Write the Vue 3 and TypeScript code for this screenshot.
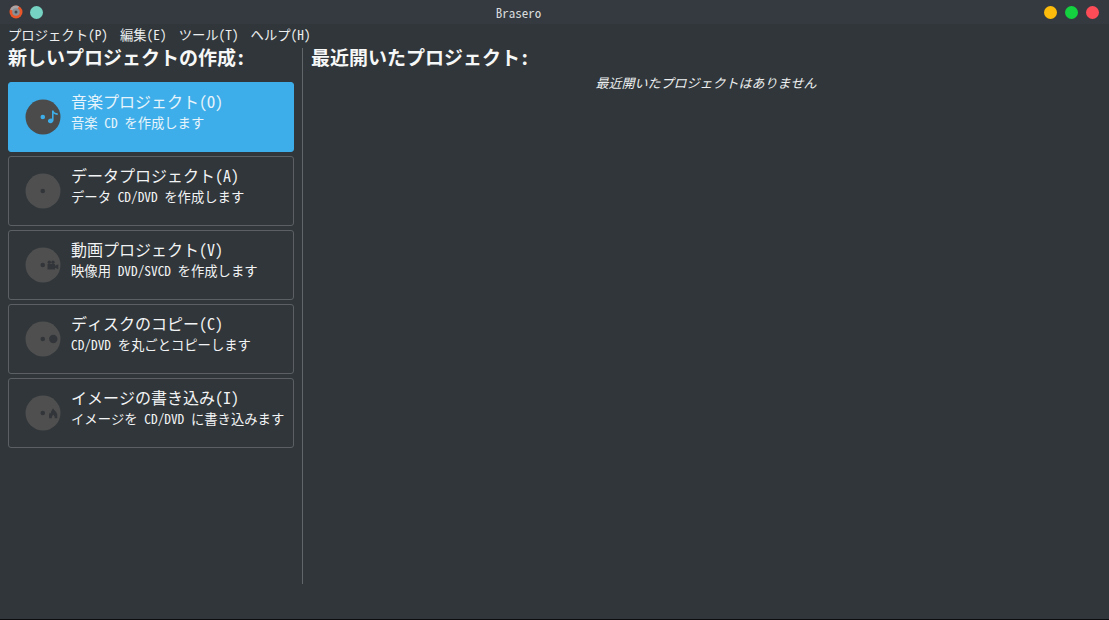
<script setup lang="ts">
interface Project {
  id: string
  title: string
  sub: string
  active?: boolean
}
const projects: Project[] = [
  { id: 'audio', title: '音楽プロジェクト(O)', sub: '音楽 CD を作成します', active: true },
  { id: 'data', title: 'データプロジェクト(A)', sub: 'データ CD/DVD を作成します' },
  { id: 'video', title: '動画プロジェクト(V)', sub: '映像用 DVD/SVCD を作成します' },
  { id: 'copy', title: 'ディスクのコピー(C)', sub: 'CD/DVD を丸ごとコピーします' },
  { id: 'burn', title: 'イメージの書き込み(I)', sub: 'イメージを CD/DVD に書き込みます' }
]
const menus = ['プロジェクト(P)', '編集(E)', 'ツール(T)', 'ヘルプ(H)']
</script>

<template>
  <div class="window">
    <header class="titlebar">
      <div class="left-buttons">
        <svg class="app-icon" width="14" height="14" viewBox="0 0 14 14">
          <circle cx="7" cy="7" r="6.5" fill="#e8562a" />
          <path d="M1 4.500A6.500 6.500 0 0 1 10 1.200L7 7Z" fill="#a9a5a6" />
          <circle cx="7" cy="7" r="3.800" fill="#8b9096" />
          <circle cx="7" cy="7" r="1.500" fill="#45494e" />
        </svg>
        <span class="dot teal"></span>
      </div>
      <div class="title">Brasero</div>
      <div class="right-buttons">
        <span class="dot yellow"></span>
        <span class="dot green"></span>
        <span class="dot red"></span>
      </div>
    </header>
    <nav class="menubar">
      <span v-for="m in menus" :key="m" class="menu">{{ m }}</span>
    </nav>
    <main class="content">
      <section class="left">
        <h2 class="heading">新しいプロジェクトの作成:</h2>
        <div class="cards">
          <div v-for="p in projects" :key="p.id" class="card" :class="{ active: p.active }">
            <svg class="disc" width="36" height="36" viewBox="0 0 36 36">
              <circle class="disc-body" cx="18" cy="18" r="17.5" />
              <circle class="disc-mark" cx="17.800" cy="18" r="2.300" />
              <path v-if="p.id === 'audio'" class="disc-mark" d="M27 11.500h1.600c.3 1.500 1.300 2.200 2.600 2.500l1.500.3v1.800l-1.500-.3c-1-.2-1.900-.6-2.600-1.200v6.400c0 2-1.500 3.200-3.100 3.200-1.500 0-2.600-.9-2.600-2.200s1.300-2.400 3-2.400c.4 0 .8.1 1.100.2Z" />
              <g v-else-if="p.id === 'video'" class="disc-mark">
                <circle cx="24.300" cy="15.300" r="1.700" />
                <circle cx="28" cy="15.300" r="1.700" />
                <rect x="22.500" y="17" width="7.500" height="5.500" />
                <path d="M30 18.700l3.300-1.500v5.100L30 20.800Z" />
              </g>
              <circle v-else-if="p.id === 'copy'" class="disc-mark" cx="28.300" cy="18" r="4.200" />
              <path v-else-if="p.id === 'burn'" class="disc-mark" d="M28.300 13.300c.4 2 4 3.600 4 7v3h-2.600c.2-1.500-.4-2.500-1.400-3.500-1 1-1.600 2-1.400 3.500H24v-3c0-1 .3-2 1-2.800.2.600.5.900.9 1.100-.1-1.900.8-3.700 2.400-5.300Z" />
            </svg>
            <div class="texts">
              <div class="card-title">{{ p.title }}</div>
              <div class="card-sub">{{ p.sub }}</div>
            </div>
          </div>
        </div>
      </section>
      <div class="separator"></div>
      <section class="right">
        <h2 class="heading">最近開いたプロジェクト:</h2>
        <p class="empty">最近開いたプロジェクトはありません</p>
      </section>
    </main>
  </div>
</template>

<style>
html, body { margin: 0; background: #30363a; }
</style>

<style scoped>
.window {
  width: 1109px;
  height: 620px;
  box-sizing: border-box;
  border-bottom: 1px solid #0b0c0d;
  background: #30363a;
  color: #f2f3f4;
  font-family: "Noto Sans Mono CJK JP", "Noto Sans CJK JP", "DejaVu Sans Mono", monospace;
  font-size: 13.33px;
  overflow: hidden;
  display: flex;
  flex-direction: column;
}
.titlebar {
  height: 24px;
  flex: none;
  display: flex;
  align-items: center;
  background: #343a3f;
}
.left-buttons {
  width: 48px;
  box-sizing: border-box;
  padding-left: 9px;
  display: flex;
  align-items: center;
  gap: 7px;
}
.right-buttons {
  width: 120px;
  box-sizing: border-box;
  padding-right: 10px;
  display: flex;
  justify-content: flex-end;
  gap: 8px;
}
.title {
  flex: 1;
  text-align: center;
  font-size: 13px;
  color: #d8dadc;
}
.dot {
  width: 13px;
  height: 13px;
  border-radius: 50%;
}
.teal { background: #76d2c2; }
.yellow { background: #fdbc0b; }
.green { background: #14d13f; }
.red { background: #fb4c58; }
.menubar {
  height: 22px;
  box-sizing: border-box;
  padding: 0 0 2px 8px;
  flex: none;
  display: flex;
  align-items: center;
  gap: 12px;
  color: #eceeef;
}
.content {
  flex: 1;
  display: flex;
  min-height: 0;
  padding: 2px 0 35px;
}
.left {
  width: 286px;
  margin-left: 8px;
  flex: none;
}
.separator {
  width: 1px;
  flex: none;
  margin-left: 8px;
  background: #62666b;
}
.right {
  flex: 1;
  padding: 0 8px;
  min-width: 0;
}
.heading {
  margin: 0;
  height: 20px;
  font-size: 19px;
  line-height: 18px;
  font-weight: 700;
  color: #f6f7f7;
}
.cards {
  margin-top: 14px;
  display: flex;
  flex-direction: column;
  gap: 4px;
}
.card {
  height: 70px;
  box-sizing: border-box;
  border: 1px solid #5c6065;
  border-radius: 3px;
  display: flex;
  align-items: center;
  padding-left: 16px;
  gap: 10px;
  color: #f2f3f4;
}
.card.active {
  background: #3daee9;
  border-color: #3daee9;
  color: #e8f4fb;
}
.disc { flex: none; }
.disc-body { fill: #4f4f4f; }
.disc-mark { fill: #32363a; }
.active .disc-body { fill: #4b4b4b; }
.active .disc-mark { fill: #3daee9; }
.texts {
  align-self: flex-start;
  margin-top: 7px;
}
.card-title {
  font-size: 16px;
  line-height: 22px;
}
.card-sub {
  font-size: 13.33px;
  line-height: 22px;
}
.empty {
  margin: 5px 0 0;
  text-align: center;
  font-style: italic;
  font-size: 13px;
  line-height: 20px;
  color: #eceeef;
}
</style>
